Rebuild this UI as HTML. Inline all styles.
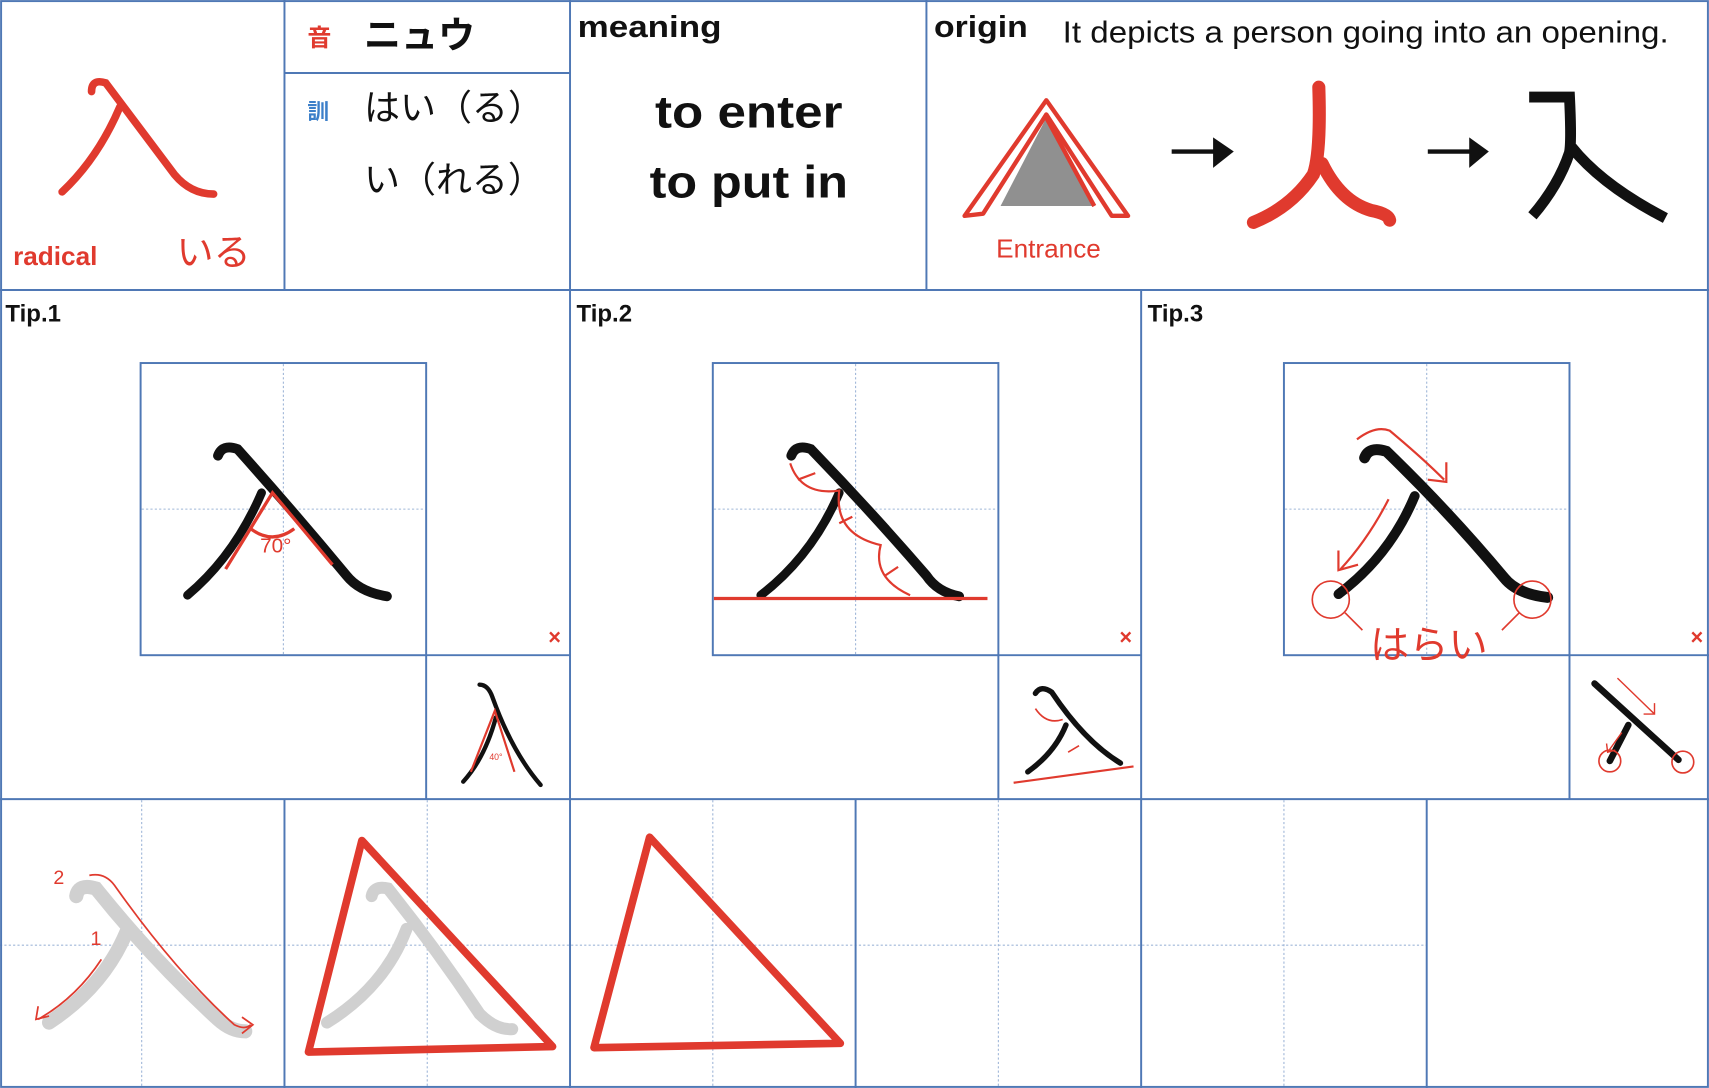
<!DOCTYPE html>
<html><head><meta charset="utf-8"><style>
html,body{margin:0;padding:0;background:#fff;width:1709px;height:1088px;overflow:hidden}
svg{display:block}
text{font-family:"Liberation Sans","Noto Sans CJK JP",sans-serif}
</style></head><body>
<svg width="1709" height="1088" viewBox="0 0 1568 998" preserveAspectRatio="none" xmlns="http://www.w3.org/2000/svg">
<rect width="1568" height="998" fill="#fff"/>
<g stroke="#9fb6d8" stroke-width="1" stroke-dasharray="2,2" fill="none">
<line x1="260" y1="334" x2="260" y2="600"/><line x1="130" y1="467" x2="390" y2="467"/>
<line x1="785" y1="334" x2="785" y2="600"/><line x1="655" y1="467" x2="915" y2="467"/>
<line x1="1309" y1="334" x2="1309" y2="600"/><line x1="1179" y1="467" x2="1439" y2="467"/>
<line x1="130" y1="734" x2="130" y2="998"/><line x1="392" y1="734" x2="392" y2="998"/>
<line x1="654" y1="734" x2="654" y2="998"/><line x1="916" y1="734" x2="916" y2="998"/>
<line x1="1178" y1="734" x2="1178" y2="998"/>
<line x1="0" y1="867" x2="1309" y2="867"/>
</g>
<g stroke="#4f78b5" stroke-width="1.8" fill="none">
<rect x="1" y="1" width="1566" height="996"/>
<line x1="0" y1="266" x2="1568" y2="266"/>
<line x1="261" y1="0" x2="261" y2="266"/><line x1="523" y1="0" x2="523" y2="998"/><line x1="850" y1="0" x2="850" y2="266"/>
<line x1="261" y1="67" x2="523" y2="67"/>
<line x1="1047" y1="266" x2="1047" y2="998"/>
<line x1="0" y1="733" x2="1568" y2="733"/>
<rect x="129" y="333" width="262" height="268"/><line x1="391" y1="601" x2="523" y2="601"/><line x1="391" y1="601" x2="391" y2="733"/>
<rect x="654" y="333" width="262" height="268"/><line x1="916" y1="601" x2="1047" y2="601"/><line x1="916" y1="601" x2="916" y2="733"/>
<rect x="1178" y="333" width="262" height="268"/><line x1="1440" y1="601" x2="1568" y2="601"/><line x1="1440" y1="601" x2="1440" y2="733"/>
<line x1="261" y1="733" x2="261" y2="998"/><line x1="785" y1="733" x2="785" y2="998"/><line x1="1309" y1="733" x2="1309" y2="998"/>
</g>
<!-- Row 1 -->
<g fill="none" stroke="#e03a2e" stroke-width="7" stroke-linecap="round">
<path d="M84,84 Q84,72 97,76 Q130,120 160,160 Q175,178 196,178"/>
<path d="M110,98 Q90,145 57,176"/>
</g>
<text x="12" y="243" font-size="24" font-weight="bold" fill="#e03a2e">radical</text>
<text x="162" y="243" font-size="34" fill="#e03a2e">いる</text>
<text x="282" y="42" font-size="22" font-weight="bold" fill="#e03a2e">音</text>
<text x="334" y="44" font-size="34" font-weight="bold" fill="#111">ニュウ</text>
<text x="282" y="109" font-size="20" font-weight="bold" fill="#3c7fc9">訓</text>
<text x="334" y="110" font-size="33" fill="#111">はい（る）</text>
<text x="334" y="176" font-size="33" fill="#111">い（れる）</text>
<text x="530" y="34" font-size="28" font-weight="bold" fill="#111" textLength="132" lengthAdjust="spacingAndGlyphs">meaning</text>
<text x="687" y="117" font-size="42" font-weight="bold" fill="#111" text-anchor="middle" textLength="172" lengthAdjust="spacingAndGlyphs">to enter</text>
<text x="687" y="181" font-size="42" font-weight="bold" fill="#111" text-anchor="middle" textLength="182" lengthAdjust="spacingAndGlyphs">to put in</text>
<text x="857" y="34" font-size="28" font-weight="bold" fill="#111" textLength="86" lengthAdjust="spacingAndGlyphs">origin</text>
<text x="975" y="39" font-size="28" fill="#111" textLength="556" lengthAdjust="spacingAndGlyphs">It depicts a person going into an opening.</text>
<polygon points="918,189 960,108 1004,189" fill="#909090"/>
<g fill="none" stroke="#e03a2e" stroke-width="4" stroke-linejoin="round">
<path d="M885,198 L960,92 L1035,198 L1020,198 L960,105 L902,196 Z"/>
<path d="M1004,189 L960,108"/>
</g>
<text x="962" y="236" font-size="24" fill="#e03a2e" text-anchor="middle">Entrance</text>
<g stroke="#111" stroke-width="4"><line x1="1075" y1="139" x2="1115" y2="139"/><line x1="1310" y1="139" x2="1350" y2="139"/></g>
<polygon points="1113,126 1132,139 1113,154" fill="#111"/><polygon points="1348,126 1366,139 1348,154" fill="#111"/>
<g fill="none" stroke="#e03a2e" stroke-width="12" stroke-linecap="round">
<path d="M1210,80 Q1212,140 1205,160 Q1185,190 1150,204"/>
<path d="M1213,150 Q1230,185 1258,193 Q1274,196 1275,202"/>
</g>
<g fill="none" stroke="#111" stroke-width="10">
<path d="M1403,89 L1440,89 Q1442,130 1440,140 Q1430,170 1406,198"/>
<path d="M1442,135 Q1470,170 1528,200"/>
</g>
<text x="5" y="295" font-size="22" font-weight="bold" fill="#111">Tip.1</text>
<text x="529" y="295" font-size="22" font-weight="bold" fill="#111">Tip.2</text>
<text x="1053" y="295" font-size="22" font-weight="bold" fill="#111">Tip.3</text>
<g fill="#e03a2e" font-size="20" font-weight="bold"><text x="503" y="591">×</text><text x="1027" y="591">×</text><text x="1551" y="591">×</text></g>
<!-- Tip1 -->
<g fill="none" stroke="#111" stroke-linecap="round">
<path d="M200,418 Q204,407 218,412 Q270,470 318,528 Q330,543 355,547" stroke-width="9"/>
<path d="M240,452 Q215,510 172,546" stroke-width="8"/>
<path d="M440,628 Q448,628 452,640 Q470,690 496,720" stroke-width="4"/>
<path d="M455,658 Q445,695 425,717" stroke-width="4"/>
</g>
<g fill="none" stroke="#e03a2e" stroke-width="3">
<path d="M207,522 L250,452 L305,518"/><path d="M230,485 Q250,500 270,485"/>
<path d="M432,708 L454,652 L472,708" stroke-width="2"/>
</g>
<text x="253" y="507" font-size="19" fill="#e03a2e" text-anchor="middle">70°</text>
<text x="455" y="697" font-size="8" fill="#e03a2e" text-anchor="middle">40°</text>
<!-- Tip2 -->
<g fill="none" stroke="#111" stroke-linecap="round">
<path d="M726,418 Q730,407 744,412 Q800,470 850,528 Q860,543 880,547" stroke-width="9"/>
<path d="M770,452 Q745,510 698,546" stroke-width="8"/>
<path d="M950,636 Q955,628 965,635 Q995,680 1028,700" stroke-width="5"/>
<path d="M978,665 Q968,690 943,708" stroke-width="5"/>
</g>
<g fill="none" stroke="#e03a2e" stroke-width="3">
<line x1="655" y1="549" x2="906" y2="549"/>
<path d="M725,425 Q735,455 770,450 Q765,490 808,500 Q800,530 835,546" stroke-width="2"/>
<path d="M732,440 L748,434 M770,480 L782,474 M812,528 L824,520" stroke-width="2"/>
<line x1="930" y1="718" x2="1040" y2="703" stroke-width="2"/>
<path d="M950,650 Q960,665 975,660 M980,690 L990,684" stroke-width="1.5"/>
</g>
<!-- Tip3 -->
<g fill="none" stroke="#111" stroke-linecap="round">
<path d="M1252,420 Q1256,409 1272,414 Q1330,470 1380,530 Q1392,545 1420,548" stroke-width="10"/>
<path d="M1298,455 Q1275,510 1228,545" stroke-width="9"/>
<line x1="1463" y1="627" x2="1540" y2="697" stroke-width="6"/>
<line x1="1494" y1="665" x2="1477" y2="698" stroke-width="6"/>
</g>
<g fill="none" stroke="#e03a2e" stroke-width="2">
<path d="M1245,403 Q1262,390 1275,395 Q1305,420 1325,440"/><path d="M1327,424 L1327,442 L1310,440"/>
<path d="M1274,458 Q1255,495 1230,522"/><path d="M1228,505 L1228,523 L1246,518"/>
<circle cx="1221" cy="550" r="17" stroke-width="1.5"/><circle cx="1406" cy="550" r="17" stroke-width="1.5"/>
<line x1="1234" y1="562" x2="1250" y2="578" stroke-width="1.5"/><line x1="1394" y1="562" x2="1378" y2="578" stroke-width="1.5"/>
<circle cx="1477" cy="698" r="10" stroke-width="1.5"/><circle cx="1544" cy="699" r="10" stroke-width="1.5"/>
<path d="M1484,622 L1518,655 M1518,645 L1518,655 L1508,655" stroke-width="1.3"/>
<path d="M1488,672 L1475,690 M1474,682 L1475,690 L1482,688" stroke-width="1.3"/>
</g>
<text x="1311" y="604" font-size="36" fill="#e03a2e" text-anchor="middle">はらい</text>
<!-- Row 3 -->
<g fill="none" stroke="#d0d0d0" stroke-width="13" stroke-linecap="round">
<path d="M70,822 Q72,810 88,815 Q140,880 200,935 Q212,946 225,946"/>
<path d="M116,855 Q95,905 45,938"/>
<path d="M341,822 Q343,812 356,815 Q400,870 440,930 Q455,945 470,944" stroke-width="11"/>
<path d="M373,852 Q353,905 300,938" stroke-width="11"/>
</g>
<g fill="none" stroke="#e03a2e" stroke-width="1.6">
<path d="M82,803 Q96,800 105,812 Q160,890 215,940 Q225,945 230,940"/><path d="M222,933 L232,940 L222,948"/>
<path d="M93,880 Q70,915 35,935"/><path d="M35,923 L33,935 L45,932"/>
</g>
<text x="54" y="811" font-size="18" fill="#e03a2e" text-anchor="middle">2</text>
<text x="88" y="867" font-size="18" fill="#e03a2e" text-anchor="middle">1</text>
<g fill="none" stroke="#e03a2e" stroke-width="7" stroke-linejoin="round">
<polygon points="332,771 507,960 283,965"/>
<polygon points="596,768 771,957 545,961"/>
</g>
</svg>
</body></html>
